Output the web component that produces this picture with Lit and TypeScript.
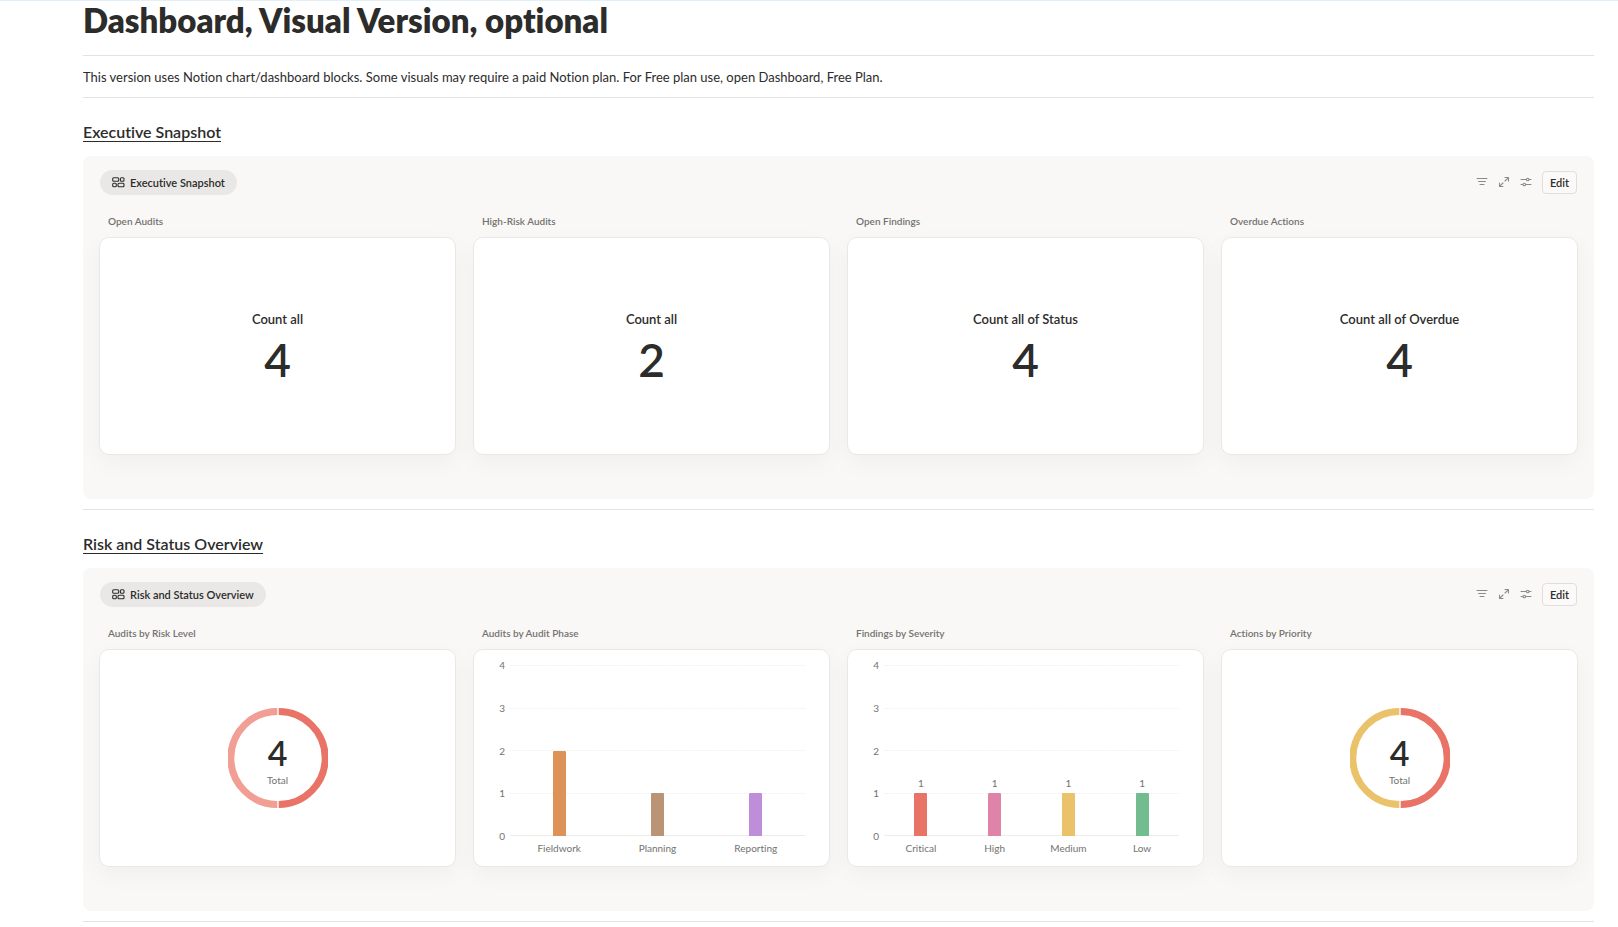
import { LitElement, html, css, svg, nothing } from "lit";
import { customElement, property } from "lit/decorators.js";

interface Bar {
  label: string;
  value: number;
  color: string;
}

const iconDashboard = html`<svg width="13" height="12" viewBox="0 0 13 12" fill="none" stroke="currentColor" stroke-width="1.1" aria-hidden="true">
  <rect x="0.7" y="0.7" width="6" height="3.6" rx="1"></rect>
  <rect x="8.4" y="0.7" width="3.6" height="3.6" rx="1"></rect>
  <rect x="0.7" y="6.2" width="3.6" height="3.6" rx="1"></rect>
  <rect x="6" y="6.2" width="6" height="3.6" rx="1"></rect>
</svg>`;

const iconFilter = html`<svg width="12" height="12" viewBox="0 0 12 12" fill="none" stroke="currentColor" stroke-width="1.1" stroke-linecap="round" aria-hidden="true">
  <path d="M1 2.5h10M2.5 5.5h7M4 8.5h4"></path>
</svg>`;

const iconExpand = html`<svg width="12" height="12" viewBox="0 0 12 12" fill="none" stroke="currentColor" stroke-width="1.1" stroke-linecap="round" stroke-linejoin="round" aria-hidden="true">
  <path d="M7 1.5h3.5V5M10.2 1.8L7 5M5 10.5H1.5V7M1.8 10.2L5 7"></path>
</svg>`;

const iconSliders = html`<svg width="12" height="12" viewBox="0 0 12 12" fill="none" stroke="currentColor" stroke-width="1.1" stroke-linecap="round" aria-hidden="true">
  <path d="M1 3.5h5M9.4 3.5H11M1 8.5h1.6M6 8.5h5"></path>
  <circle cx="7.7" cy="3.5" r="1.3"></circle>
  <circle cx="4.3" cy="8.5" r="1.3"></circle>
</svg>`;

@customElement("number-tile")
export class NumberTile extends LitElement {
  @property() label = "";
  @property() value = "";

  static styles = css`
    :host {
      display: flex;
      flex-direction: column;
      align-items: center;
      justify-content: center;
      padding-top: 5px;
    }
    .label {
      font-size: 13px;
      line-height: 20px;
      font-weight: 600;
    }
    .value {
      font-size: 46px;
      line-height: 56px;
      font-weight: 600;
      margin-top: 3px;
    }
  `;

  render() {
    return html`<div class="label">${this.label}</div>
      <div class="value">${this.value}</div>`;
  }
}

@customElement("donut-chart")
export class DonutChart extends LitElement {
  @property() total = "";
  @property() right = "";
  @property() left = "";

  static styles = css`
    :host {
      display: grid;
      place-items: center;
    }
    .ring,
    .center {
      grid-area: 1 / 1;
    }
    .center {
      display: flex;
      flex-direction: column;
      align-items: center;
      padding-top: 6px;
    }
    .total {
      font-size: 34px;
      line-height: 38px;
      font-weight: 600;
    }
    .caption {
      font-size: 10px;
      line-height: 16px;
      color: #73726e;
    }
  `;

  render() {
    return html`<svg class="ring" width="100" height="100" viewBox="0 0 100 100" fill="none" stroke-width="7" aria-hidden="true">
        ${svg`<path d="M50.7 3.5A46.5 46.5 0 0 1 50.7 96.5" stroke=${this.right}></path>
        <path d="M49.3 3.5A46.5 46.5 0 0 0 49.3 96.5" stroke=${this.left}></path>`}
      </svg>
      <div class="center">
        <div class="total">${this.total}</div>
        <div class="caption">Total</div>
      </div>`;
  }
}

@customElement("bar-chart")
export class BarChart extends LitElement {
  @property({ attribute: false }) bars: Bar[] = [];
  @property({ type: Boolean }) values = false;

  static styles = css`
    :host {
      display: block;
      padding: 8px 24px 0;
      font-size: 10px;
      line-height: 14px;
      color: #73726e;
    }
    .chart {
      display: grid;
      grid-template-columns: 7px 1fr;
      column-gap: 5px;
    }
    .ticks {
      display: flex;
      flex-direction: column;
      justify-content: space-between;
      height: 185px;
      text-align: right;
    }
    .plot {
      display: grid;
      height: 171px;
      margin-top: 7px;
    }
    .lines,
    .bars {
      grid-area: 1 / 1;
    }
    .lines {
      display: flex;
      flex-direction: column;
      justify-content: space-between;
    }
    .line {
      height: 1px;
      background: repeating-linear-gradient(90deg, #ededec 0 1px, #fbfbfb 1px 3px);
    }
    .line.axis {
      background: #ececeb;
    }
    .bars,
    .names {
      display: flex;
    }
    .slot {
      flex: 1;
      display: flex;
      flex-direction: column;
      justify-content: flex-end;
      align-items: center;
    }
    .bar {
      width: 13px;
      border-radius: 1px 1px 0 0;
    }
    .names {
      grid-column: 2;
      margin-top: -2px;
    }
    .name {
      flex: 1;
      text-align: center;
    }
    .value {
      margin-bottom: 3px;
    }
  `;

  render() {
    return html`<div class="chart">
      <div class="ticks">${[4, 3, 2, 1, 0].map((t) => html`<span>${t}</span>`)}</div>
      <div class="plot">
        <div class="lines">
          ${[4, 3, 2, 1].map(() => html`<div class="line"></div>`)}
          <div class="line axis"></div>
        </div>
        <div class="bars">
          ${this.bars.map(
            (b) => html`<div class="slot">
              ${this.values ? html`<div class="value">${b.value}</div>` : nothing}
              <div class="bar" style="height:${b.value * 25}%;background:${b.color}"></div>
            </div>`
          )}
        </div>
      </div>
      <div class="names">${this.bars.map((b) => html`<div class="name">${b.label}</div>`)}</div>
    </div>`;
  }
}

const phases: Bar[] = [
  { label: "Fieldwork", value: 2, color: "#dd9257" },
  { label: "Planning", value: 1, color: "#bb9476" },
  { label: "Reporting", value: 1, color: "#bf8eda" },
];

const severities: Bar[] = [
  { label: "Critical", value: 1, color: "#e97366" },
  { label: "High", value: 1, color: "#df84a8" },
  { label: "Medium", value: 1, color: "#e9c26a" },
  { label: "Low", value: 1, color: "#72bc8f" },
];

@customElement("app-root")
export class AppRoot extends LitElement {
  static styles = css`
    :host {
      display: block;
      min-height: 100vh;
      box-sizing: border-box;
      border-top: 1px solid #e3f0fa;
      background: #fff;
      color: #2c2c2b;
      font-family: Lato, "Noto Sans", sans-serif;
      font-variant-ligatures: none;
    }
    .page {
      padding: 0 24px 0 83px;
    }
    .title {
      margin: 0;
      font-size: 33px;
      line-height: 38px;
      font-weight: 800;
    }
    .rule {
      height: 1px;
      margin: 0;
      border: 0;
      background: #e3e3e2;
    }
    .title + .rule {
      margin-top: 16px;
    }
    .note {
      margin: 0;
      padding: 11px 0 10px;
      font-size: 13px;
      line-height: 20px;
    }
    .heading {
      margin: 0;
      padding: 22px 0 12px;
      font-size: 16px;
      line-height: 24px;
      font-weight: 600;
      text-decoration: underline;
      text-underline-offset: 3px;
      text-decoration-skip-ink: none;
      text-decoration-thickness: 1px;
    }
    .panel {
      background: #f9f8f7;
      border-radius: 8px;
      padding: 13px 16px 44px;
      margin-bottom: 10px;
      overflow: hidden;
    }
    .bar {
      display: flex;
      align-items: center;
      justify-content: space-between;
      height: 26px;
      padding: 0 1px;
    }
    .pill {
      display: flex;
      align-items: center;
      gap: 5px;
      height: 25px;
      padding: 1px 12px 0;
      border: 0;
      border-radius: 13px;
      background: #e9e8e6;
      color: inherit;
      font: 600 11px/16px Lato, "Noto Sans", sans-serif;
      font-variant-ligatures: none;
    }
    .tools {
      display: flex;
      align-items: center;
      gap: 10px;
    }
    .tool {
      display: flex;
      padding: 0;
      border: 0;
      background: none;
      color: #8e8b86;
    }
    .edit {
      height: 23px;
      padding: 1px 7px 0;
      border: 1px solid #e0dfdd;
      border-radius: 4px;
      background: #fbfaf9;
      color: #2c2c2b;
      font: 600 11px/16px Lato, "Noto Sans", sans-serif;
    }
    .cards {
      display: grid;
      grid-template-columns: repeat(4, 1fr);
      gap: 17px;
      margin-top: 18px;
    }
    .name {
      margin: 0 0 8px;
      padding-left: 9px;
      font-size: 10px;
      line-height: 16px;
      font-weight: 600;
      color: #73726e;
    }
    .card {
      display: grid;
      height: 216px;
      border: 1px solid #e9e8e6;
      border-radius: 10px;
      background: #fff;
      box-shadow: 0 8px 24px rgba(25, 25, 25, 0.04);
    }
  `;

  private section(title: string, cards: { name: string; body: unknown }[]) {
    return html`<section>
      <h2 class="heading">${title}</h2>
      <div class="panel">
        <div class="bar">
          <button class="pill" type="button">${iconDashboard}<span>${title}</span></button>
          <div class="tools">
            <button class="tool" type="button" aria-label="Filter">${iconFilter}</button>
            <button class="tool" type="button" aria-label="Expand">${iconExpand}</button>
            <button class="tool" type="button" aria-label="Settings">${iconSliders}</button>
            <button class="edit" type="button">Edit</button>
          </div>
        </div>
        <div class="cards">
          ${cards.map((c) => html`<article><h3 class="name">${c.name}</h3><div class="card">${c.body}</div></article>`)}
        </div>
      </div>
      <hr class="rule" />
    </section>`;
  }

  render() {
    return html`<main class="page">
      <h1 class="title">Dashboard, Visual Version, optional</h1>
      <hr class="rule" />
      <p class="note">This version uses Notion chart/dashboard blocks. Some visuals may require a paid Notion plan. For Free plan use, open Dashboard, Free Plan.</p>
      <hr class="rule" />
      ${this.section("Executive Snapshot", [
        { name: "Open Audits", body: html`<number-tile label="Count all" value="4"></number-tile>` },
        { name: "High-Risk Audits", body: html`<number-tile label="Count all" value="2"></number-tile>` },
        { name: "Open Findings", body: html`<number-tile label="Count all of Status" value="4"></number-tile>` },
        { name: "Overdue Actions", body: html`<number-tile label="Count all of Overdue" value="4"></number-tile>` },
      ])}
      ${this.section("Risk and Status Overview", [
        { name: "Audits by Risk Level", body: html`<donut-chart total="4" right="#e97366" left="#f19e94"></donut-chart>` },
        { name: "Audits by Audit Phase", body: html`<bar-chart .bars=${phases}></bar-chart>` },
        { name: "Findings by Severity", body: html`<bar-chart .bars=${severities} values></bar-chart>` },
        { name: "Actions by Priority", body: html`<donut-chart total="4" right="#e97366" left="#e9c26a"></donut-chart>` },
      ])}
    </main>`;
  }
}
